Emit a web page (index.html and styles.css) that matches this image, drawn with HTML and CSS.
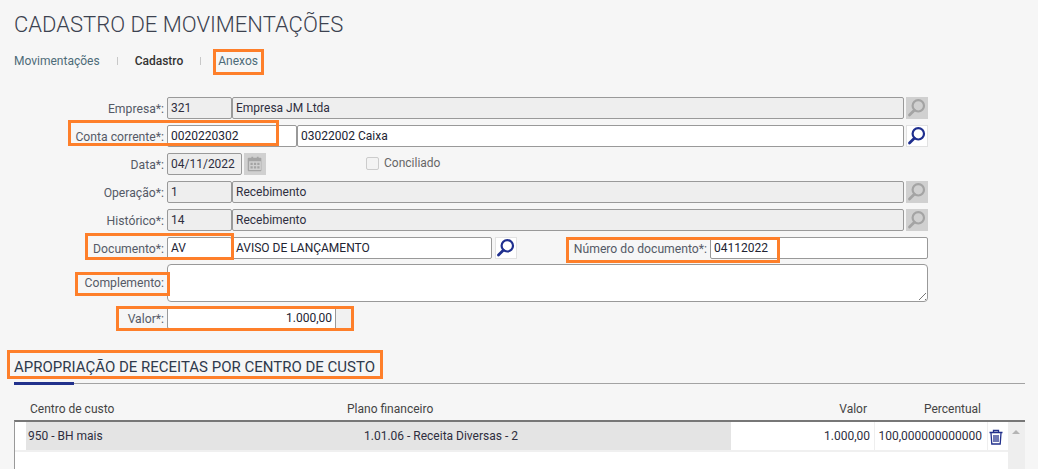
FILE: index.html
```html
<!DOCTYPE html>
<html lang="pt-BR">
<head>
<meta charset="utf-8">
<title>Cadastro de Movimentações</title>
<link rel="stylesheet" href="styles.css">
</head>
<body>
<svg class="defs" width="0" height="0" aria-hidden="true">
  <symbol id="lupa" viewBox="1 1 20 20">
    <circle cx="12.300" cy="8.800" r="5.700" fill="none" stroke="currentColor" stroke-width="2.200"/>
    <path d="M8.300 13.300 3.500 18" fill="none" stroke="currentColor" stroke-width="2.800" stroke-linecap="round"/>
  </symbol>
</svg>
<main class="page">
  <h1 class="title">CADASTRO DE MOVIMENTAÇÕES</h1>
  <nav class="tabs">
    <a class="tab">Movimentações</a><span class="sep"></span>
    <a class="tab active">Cadastro</a><span class="sep"></span>
    <a class="tab">Anexos</a>
  </nav>

  <form class="form">
    <div class="row">
      <label class="lbl">Empresa*:</label>
      <div class="field off code">321</div>
      <div class="field off grow">Empresa JM Ltda</div>
      <span class="btn off"><svg><use href="#lupa"/></svg></span>
    </div>
    <div class="row">
      <label class="lbl">Conta corrente*:</label>
      <div class="field conta">0020220302</div>
      <div class="field grow">03022002 Caixa</div>
      <span class="btn"><svg><use href="#lupa"/></svg></span>
    </div>
    <div class="row">
      <label class="lbl">Data*:</label>
      <div class="field off date">04/11/2022</div>
      <span class="btn off cal">
        <svg viewBox="0 0 22 22"><path fill="currentColor" d="M5 4h2V3h2v1h4V3h2v1h2a1 1 0 0 1 1 1v13a1 1 0 0 1-1 1H4a1 1 0 0 1-1-1V5a1 1 0 0 1 1-1zM4.500 8v9.500h13V8z"/><path fill="currentColor" d="M6 9.500h2.500V12H6zM9.800 9.500h2.500V12H9.800zM13.500 9.500H16V12h-2.500zM6 13.500h2.500V16H6zM9.800 13.500h2.500V16H9.800zM13.500 13.500H16V16h-2.500z"/></svg>
      </span>
      <span class="check"><i class="box"></i>Conciliado</span>
    </div>
    <div class="row">
      <label class="lbl">Operação*:</label>
      <div class="field off code">1</div>
      <div class="field off grow">Recebimento</div>
      <span class="btn off"><svg><use href="#lupa"/></svg></span>
    </div>
    <div class="row">
      <label class="lbl">Histórico*:</label>
      <div class="field off code">14</div>
      <div class="field off grow">Recebimento</div>
      <span class="btn off"><svg><use href="#lupa"/></svg></span>
    </div>
    <div class="row">
      <label class="lbl">Documento*:</label>
      <div class="field code">AV</div>
      <div class="field doc">AVISO DE LANÇAMENTO</div>
      <span class="btn"><svg><use href="#lupa"/></svg></span>
      <label class="lbl num">Número do documento*:</label>
      <div class="field numval">04112022</div>
    </div>
    <div class="row top">
      <label class="lbl lbl-mid">Complemento:</label>
      <div class="area"></div>
    </div>
    <div class="row">
      <label class="lbl">Valor*:</label>
      <div class="field valor">1.000,00</div>
      <div class="addon"></div>
    </div>
  </form>

  <section class="section">
    <h2 class="subtitle">APROPRIAÇÃO DE RECEITAS POR CENTRO DE CUSTO</h2>
    <div class="rule"><span class="rule-mark"></span></div>
    <div class="thead">
      <span class="th c1">Centro de custo</span>
      <span class="th c2">Plano financeiro</span>
      <span class="th c3">Valor</span>
      <span class="th c4">Percentual</span>
    </div>
    <div class="tbody">
      <div class="rows">
        <div class="tr">
          <span class="gut"></span>
          <span class="td d1">950 - BH mais</span>
          <span class="td d2">1.01.06 - Receita Diversas - 2</span>
          <span class="td d3">1.000,00</span>
          <span class="td d4">100,000000000000</span>
          <span class="td d5">
            <svg width="16" height="16" viewBox="0 0 16 16" fill="none" stroke="#22318c" stroke-width="1.300"><path d="M1.500 3.500h13M5.500 3.300V1.500h5v1.800M3 4l.8 11h8.400L13 4M6 6v7M8 6v7M10 6v7"/></svg>
          </span>
        </div>
      </div>
      <div class="scroll"><i class="arrow"></i></div>
    </div>
  </section>

  <!-- marcações laranja sobre a captura -->
  <i class="mark m-anexos"></i>
  <i class="mark m-conta"></i>
  <i class="mark m-doc"></i>
  <i class="mark m-num"></i>
  <i class="mark m-comp"></i>
  <i class="mark m-valor"></i>
  <i class="mark m-sec"></i>
</main>
</body>
</html>
```
FILE: styles.css
```css
* { box-sizing: border-box; }
html, body { margin: 0; height: 469px; overflow: hidden; }
body { background: #f6f6f6; color: #2a2a3a; font: 12px/1 Roboto, "Liberation Sans", sans-serif; }
.defs { position: absolute; }
.page { position: relative; width: 1038px; height: 469px; overflow: hidden; padding: 12px 0 0 14px; }

.title { margin: 0; font-weight: 300; font-size: 22px; line-height: 26px; color: #3c4250; }
.tabs { display: flex; align-items: center; height: 16px; margin-top: 15px; font-size: 12px; color: #4d6b78; }
.tab.active { color: #333; font-weight: 500; }
.sep { width: 1px; height: 8px; background: #c8c8c8; margin: 0 17px; }

.form { width: 914px; margin-top: 28px; display: flex; flex-direction: column; }
.row { display: flex; align-items: center; height: 22px; margin-bottom: 6px; }
.row.top { align-items: stretch; height: 38px; margin-top: -1px; margin-bottom: 5px; }
.lbl { width: 150px; margin-right: 3px; text-align: right; font-size: 12.200px; color: #555a66; flex: none; padding-top: 2px; }
.lbl-mid { padding-top: 13px; }
.field { height: 22px; line-height: 20px; padding: 0 3px; border: 1px solid #999; border-radius: 2px; background: #fff; font-size: 12px; color: #222432; flex: none; white-space: nowrap; }
.field.off { background: #eeeeee; color: #2e2e3e; }
.code { width: 65px; }
.grow { width: 672px; }
.conta { width: 130px; }
.conta + .grow { width: 607px; }
.date { width: 75px; }
.doc { width: 260px; }
.numval { width: 218px; }
.lbl.num { width: auto; margin-left: auto; }
.valor { width: 169px; text-align: right; border-radius: 2px 0 0 2px; }
.addon { width: 17px; height: 22px; border: 1px solid #999; border-left: 0; background: #f1f1f1; }
.area { width: 761px; height: 38px; border: 1px solid #999; border-radius: 4px; background: #fff; position: relative; }
.area::after { content: ""; position: absolute; right: 1px; bottom: 1px; width: 8px; height: 8px; background: repeating-linear-gradient(135deg, transparent 0 2px, #777 2px 3px, transparent 3px 4px); clip-path: polygon(100% 0, 100% 100%, 0 100%); }

.btn { width: 22px; height: 22px; margin-left: 2px; flex: none; display: flex; background: #fff; border: 1px solid #e2e2e2; color: #1f2f8f; }
.btn svg { width: 100%; height: 100%; display: block; }
.btn.off { background: #d0d0d0; border-color: #d0d0d0; color: #a4a4a4; }
.check { display: inline-flex; align-items: center; margin-left: 100px; margin-top: -2px; font-size: 12px; color: #666; }
.box { width: 13px; height: 13px; border: 1px solid #ccc; border-radius: 2px; background: #f3f3f3; margin-right: 5px; }
.row:nth-child(6) .btn { margin-left: 3px; }

.section { margin-top: 22px; }
.subtitle { margin: 0; font-weight: 400; font-size: 15px; line-height: 20px; color: #2f3a4c; }
.rule { position: relative; width: 1011px; height: 1px; margin-top: 6px; background: #a3a3a3; }
.rule-mark { position: absolute; left: 0; top: -1px; width: 60px; height: 3px; background: #22318c; }
.thead { position: relative; height: 36px; width: 1011px; font-size: 12px; color: #444; }
.th { position: absolute; top: 19px; }
.c1 { left: 16px; }
.c2 { left: 333px; }
.c3 { right: 158px; }
.c4 { right: 44px; }
.tbody { display: flex; width: 1011px; height: 60px; border-top: 2px solid #777; border-left: 1px solid #999; background: #fff; }
.rows { flex: 1; min-width: 0; }
.tr { display: flex; height: 30px; font-size: 12px; color: #2e2e3e; border-bottom: 2px solid #f0f0f0; }
.gut { width: 11px; background: #fff; }
.td { display: block; line-height: 28px; white-space: nowrap; flex: none; }
.d1 { width: 338px; background: #e4e4e4; padding-left: 2px; }
.d2 { width: 367px; background: #e4e4e4; }
.d3 { width: 144px; text-align: right; padding-right: 4px; border-right: 1px solid #eee; }
.d4 { width: 113px; text-align: right; padding-right: 5px; border-right: 1px solid #eee; }
.d5 { width: 19px; padding: 7px 0 0 0; }
.d5 svg { display: block; }
.scroll { width: 17px; background: #eeeeee; flex: none; padding: 8px 0 0 4px; }
.arrow { display: block; width: 0; height: 0; border: 4px solid transparent; border-top: 0; border-bottom: 4px solid #b4b4b4; }

.mark { position: absolute; border: 3px solid #fe7f2a; pointer-events: none; }
.m-anexos { left: 213px; top: 49px; width: 51px; height: 26px; }
.m-conta { left: 68px; top: 120px; width: 211px; height: 26px; }
.m-doc { left: 85px; top: 233px; width: 149px; height: 27px; }
.m-num { left: 566px; top: 237px; width: 214px; height: 26px; }
.m-comp { left: 75px; top: 272px; width: 95px; height: 24px; }
.m-valor { left: 116px; top: 306px; width: 238px; height: 25px; }
.m-sec { left: 7px; top: 350px; width: 376px; height: 29px; }
```
